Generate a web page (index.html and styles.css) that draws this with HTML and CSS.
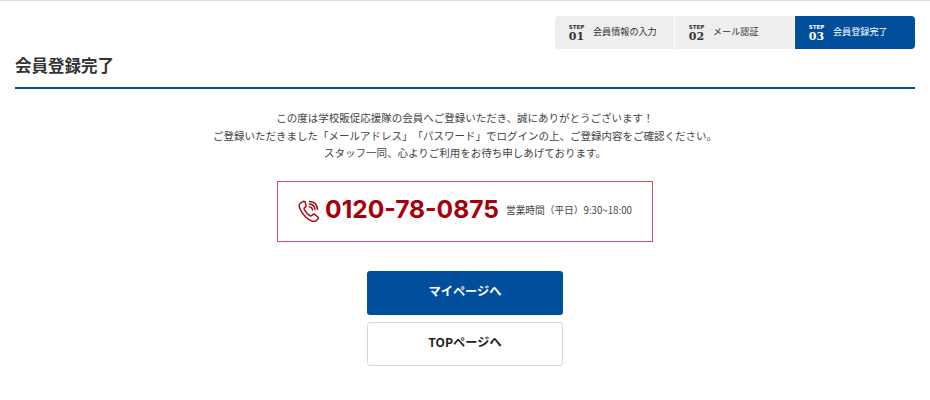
FILE: index.html
```html
<!DOCTYPE html>
<html lang="ja">
<head>
    <meta charset="UTF-8">
    <meta name="viewport" content="width=device-width, initial-scale=1.0">
    <title>会員登録完了</title>
    <link rel="stylesheet" href="styles.css">
</head>
<body>
    <div class="page">
        <ul class="steps">
            <li class="step">
                <div class="step-num"><span class="step-label">STEP</span><span class="step-no">01</span></div>
                <div class="step-name">会員情報の入力</div>
            </li>
            <li class="step">
                <div class="step-num"><span class="step-label">STEP</span><span class="step-no">02</span></div>
                <div class="step-name">メール認証</div>
            </li>
            <li class="step current">
                <div class="step-num"><span class="step-label">STEP</span><span class="step-no">03</span></div>
                <div class="step-name">会員登録完了</div>
            </li>
        </ul>

        <h1 class="page-title">会員登録完了</h1>

        <div class="message">
            <p>この度は学校販促応援隊の会員へご登録いただき、誠にありがとうございます！</p>
            <p>ご登録いただきました「メールアドレス」「パスワード」でログインの上、ご登録内容をご確認ください。</p>
            <p>スタッフ一同、心よりご利用をお待ち申しあげております。</p>
        </div>

        <div class="tel-box">
            <svg class="tel-icon" viewBox="0 0 24 24" fill="none" stroke="#a5000a" stroke-width="1.5" stroke-linecap="round" stroke-linejoin="round">
                <path d="M5.2 1.8 2.6 3.6C1.2 4.7 1 6.6 1.8 8.6c1.3 3.4 3.6 6.9 6.3 9.6 2.500 2.500 5 4.300 7.600 5 1.900.5 3.500.2 4.700-1l1.500-1.800c.5-.7.4-1.400-.2-1.900l-3.600-2.800c-.6-.5-1.300-.4-1.900.1l-1.300 1.300c-.5.4-1 .5-1.600.2-2.700-1.600-5-4.300-6.500-7.100-.3-.6-.2-1.100.2-1.500l1.300-1.200c.6-.6.7-1.200.3-1.900L7.700 2.300c-.6-.9-1.600-1.100-2.500-.5z"/>
                <path d="M12 7.200c2.200.2 3.700 1.700 3.900 3.900"/>
                <path d="M12.300 4.400c3.700.2 6 2.600 6.300 6.300"/>
                <path d="M12.600 1.600c5.100.3 8.300 3.500 8.700 8.600"/>
            </svg>
            <span class="tel-number">0120-78-0875</span>
            <span class="tel-hours">営業時間（平日）9:30~18:00</span>
        </div>

        <div class="buttons">
            <a class="btn btn-primary" href="#">マイページへ</a>
            <a class="btn btn-secondary" href="#">TOPページへ</a>
        </div>
    </div>
</body>
</html>
```

FILE: styles.css
```css
body {
    margin: 0;
    padding: 0;
    background: white;
    color: #333;
    font-family: "Noto Sans CJK JP", sans-serif;
    text-spacing-trim: space-all;
    border-top: 1px solid #ddd;
}

.page {
    padding: 15px 15px 0;
}

.steps {
    display: flex;
    justify-content: flex-end;
    list-style: none;
    margin: 0;
    padding: 0;
}

.step {
    width: 120px;
    height: 33px;
    background: #eee;
    border-right: 1px solid white;
    display: flex;
    align-items: center;
    padding-left: 14px;
    box-sizing: border-box;
    gap: 9px;
}

.step:first-child {
    border-radius: 4px 0 0 4px;
}

.step.current {
    background: #004e9c;
    border-right: none;
    color: white;
    border-radius: 0 4px 4px 0;
}

.step-num {
    display: flex;
    flex-direction: column;
    align-items: center;
    width: 15px;
}

.step-label {
    font-family: "DejaVu Sans", sans-serif;
    font-size: 5.5px;
    font-weight: bold;
    line-height: 7px;
}

.step-no {
    font-family: "DejaVu Serif", serif;
    font-size: 11px;
    font-weight: bold;
    line-height: 11px;
}

.step-name {
    font-size: 9.1px;
    line-height: 12px;
    margin-bottom: 4px;
}

.page-title {
    font-size: 16.5px;
    line-height: 24px;
    color: #333;
    margin: 4px 0 0;
    padding-bottom: 10px;
    border-bottom: 2px solid #004e9c;
}

.message {
    margin-top: 20px;
    text-align: center;
    font-size: 10.5px;
    line-height: 17.5px;
    color: #444;
}

.message p {
    margin: 0;
}

.tel-box {
    width: 376px;
    height: 61px;
    box-sizing: border-box;
    margin: 19px auto 0;
    padding-bottom: 4px;
    border: 1px solid #c9505e;
    display: flex;
    align-items: center;
    justify-content: center;
    color: #a5000a;
}

.tel-icon {
    width: 22px;
    height: 22px;
    margin: 4px 5px 0 0;
}

.tel-number {
    font-family: Inter, sans-serif;
    font-size: 24.6px;
    font-weight: bold;
    line-height: 30px;
}

.tel-hours {
    font-size: 9.7px;
    color: #444;
    margin: 2px 0 0 7px;
}

.buttons {
    margin-top: 29px;
    display: flex;
    flex-direction: column;
    align-items: center;
    gap: 7px;
}

.btn {
    display: flex;
    align-items: center;
    justify-content: center;
    box-sizing: border-box;
    width: 196px;
    height: 44px;
    padding-bottom: 4px;
    border-radius: 3px;
    font-size: 12.2px;
    font-weight: bold;
    text-decoration: none;
}

.btn-primary {
    background: #004e9c;
    color: white;
}

.btn-secondary {
    background: white;
    color: #222;
    border: 1px solid #d8d8d8;
}
```
